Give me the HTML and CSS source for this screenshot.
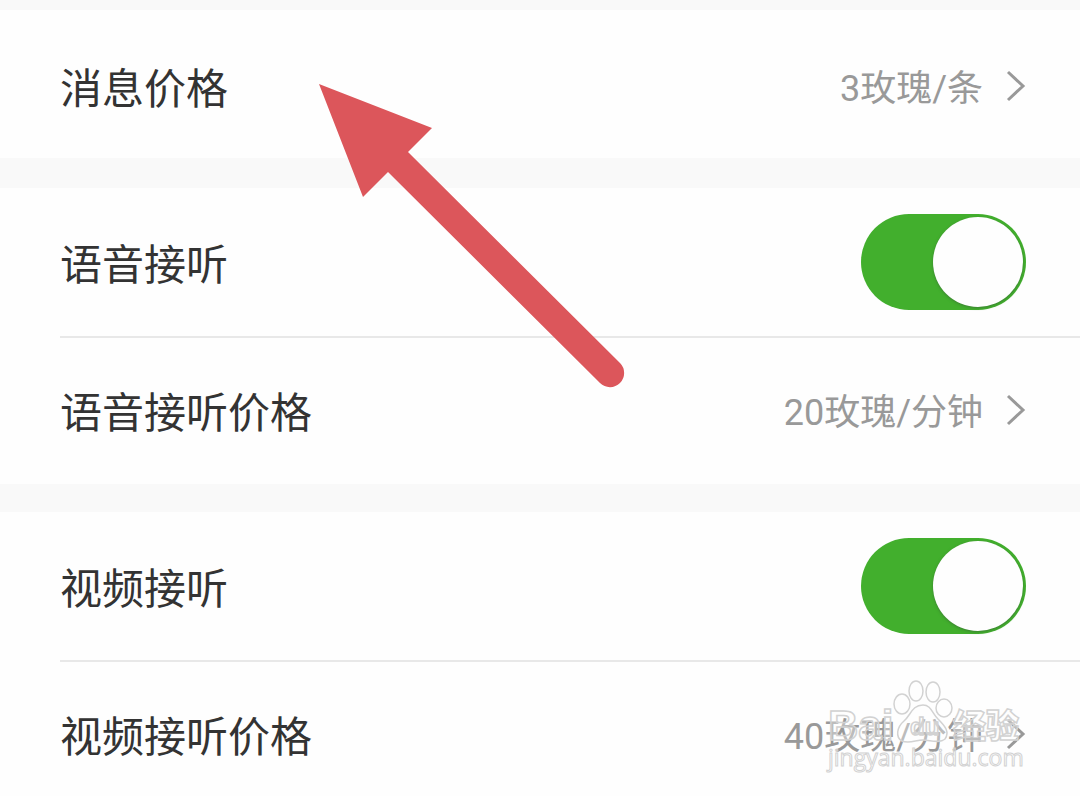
FILE: index.html
```html
<!DOCTYPE html>
<html lang="zh-CN">
<head>
<meta charset="utf-8">
<meta name="viewport" content="width=device-width, initial-scale=1">
<title>价格设置</title>
<link rel="stylesheet" href="styles.css">
</head>
<body>
<main class="settings">
  <section class="group group-first">
    <a class="row" href="#message-price">
      <span class="label">消息价格</span>
      <span class="value">3玫瑰/条</span>
      <svg class="chevron" viewBox="0 0 20 32" aria-hidden="true"><path d="M2 2 17 16 2 30"/></svg>
    </a>
  </section>
  <section class="group">
    <div class="row">
      <label class="label" for="voice">语音接听</label>
      <input class="switch" id="voice" type="checkbox" role="switch" checked>
    </div>
    <a class="row row-divided" href="#voice-price">
      <span class="label">语音接听价格</span>
      <span class="value">20玫瑰/分钟</span>
      <svg class="chevron" viewBox="0 0 20 32" aria-hidden="true"><path d="M2 2 17 16 2 30"/></svg>
    </a>
  </section>
  <section class="group">
    <div class="row">
      <label class="label" for="video">视频接听</label>
      <input class="switch" id="video" type="checkbox" role="switch" checked>
    </div>
    <a class="row row-divided" href="#video-price">
      <span class="label">视频接听价格</span>
      <span class="value">40玫瑰/分钟</span>
      <svg class="chevron" viewBox="0 0 20 32" aria-hidden="true"><path d="M2 2 17 16 2 30"/></svg>
    </a>
  </section>
  <svg class="arrow" viewBox="0 0 306 304" aria-hidden="true">
    <path d="M0 0 113 44 89 68 301 279A14 14 0 0 1 281 299L69 88 44 113Z"/>
  </svg>
  <svg class="watermark" viewBox="0 0 200 96" role="img" aria-label="Baidu 经验">
    <g class="watermark-mark">
      <ellipse cx="74" cy="27" rx="8" ry="10"/>
      <ellipse cx="88" cy="14" rx="7" ry="10"/>
      <ellipse cx="105" cy="15" rx="7" ry="10"/>
      <ellipse cx="116" cy="31" rx="8" ry="9"/>
      <path d="M95 28C84 28 83 38 76 44 69 50 67 60 74 64 81 67 88 63 95 63 102 63 111 67 117 62 122 55 117 49 110 42 104 36 103 28 95 28Z"/>
      <text class="watermark-latin" x="0" y="63">Bai</text>
      <text class="watermark-du" x="82" y="58">du</text>
      <text class="watermark-cjk" x="125" y="61">经验</text>
      <text class="watermark-site" x="0" y="89">jingyan.baidu.com</text>
    </g>
  </svg>
</main>
</body>
</html>
```
FILE: styles.css
```css
* {
  box-sizing: border-box;
}

body {
  margin: 0;
  background: #fefefe;
  font-family: "Noto Sans CJK SC", sans-serif;
}

.settings {
  position: relative;
  display: flex;
  flex-direction: column;
  gap: 28px;
  padding-top: 10px;
  overflow: hidden;
  background: #f9f9f9;
}

.group {
  background: #fefefe;
}

.group-first {
  margin-bottom: 2px;
}

.row {
  display: flex;
  align-items: center;
  min-height: 148px;
  padding: 0 54px 0 60px;
  color: #333;
  text-decoration: none;
}

.group-first .row {
  padding-top: 4px;
}

.row-divided {
  position: relative;
}

.row-divided::before {
  content: "";
  position: absolute;
  top: 0;
  right: 0;
  left: 60px;
  height: 2px;
  background: #e8e8e8;
}

.label {
  flex: 1;
  font-size: 42px;
  line-height: 58px;
}

.value {
  padding-top: 6px;
  color: #999;
  font-family: Roboto, "Noto Sans CJK SC", sans-serif;
  font-size: 36px;
  line-height: 52px;
}

.chevron {
  width: 20px;
  height: 32px;
  margin-left: 23px;
  fill: none;
  stroke: #999;
  stroke-width: 3;
}

.switch {
  appearance: none;
  display: flex;
  justify-content: flex-end;
  width: 165px;
  height: 96px;
  margin: 0;
  padding: 3px;
  border-radius: 48px;
  background: #42af2d;
  cursor: pointer;
}

.switch::before {
  content: "";
  width: 90px;
  height: 90px;
  border-radius: 50%;
  background: #fefefe;
  box-shadow: 0 1px 3px #3b7f32;
}

.switch:not(:checked) {
  justify-content: flex-start;
  background: #ddd;
}

.arrow {
  position: absolute;
  top: 84px;
  left: 319px;
  width: 306px;
  height: 304px;
  fill: #dc565b;
  pointer-events: none;
}

.watermark {
  position: absolute;
  right: 52px;
  bottom: 35px;
  width: 200px;
  height: 96px;
  overflow: visible;
  pointer-events: none;
}

.watermark-mark {
  fill: #fff;
  fill-opacity: 0.35;
  stroke: #d2d2d2;
  stroke-width: 1.5;
  font-family: "Liberation Sans", "Noto Sans CJK SC", sans-serif;
}

.watermark-latin {
  font-size: 42px;
  font-weight: 700;
}

.watermark-du {
  font-size: 24px;
  font-weight: 700;
}

.watermark-cjk {
  font-size: 33px;
  font-weight: 900;
}

.watermark-site {
  font-family: "Open Sans", sans-serif;
  font-size: 23px;
  stroke-width: 1;
}
```
